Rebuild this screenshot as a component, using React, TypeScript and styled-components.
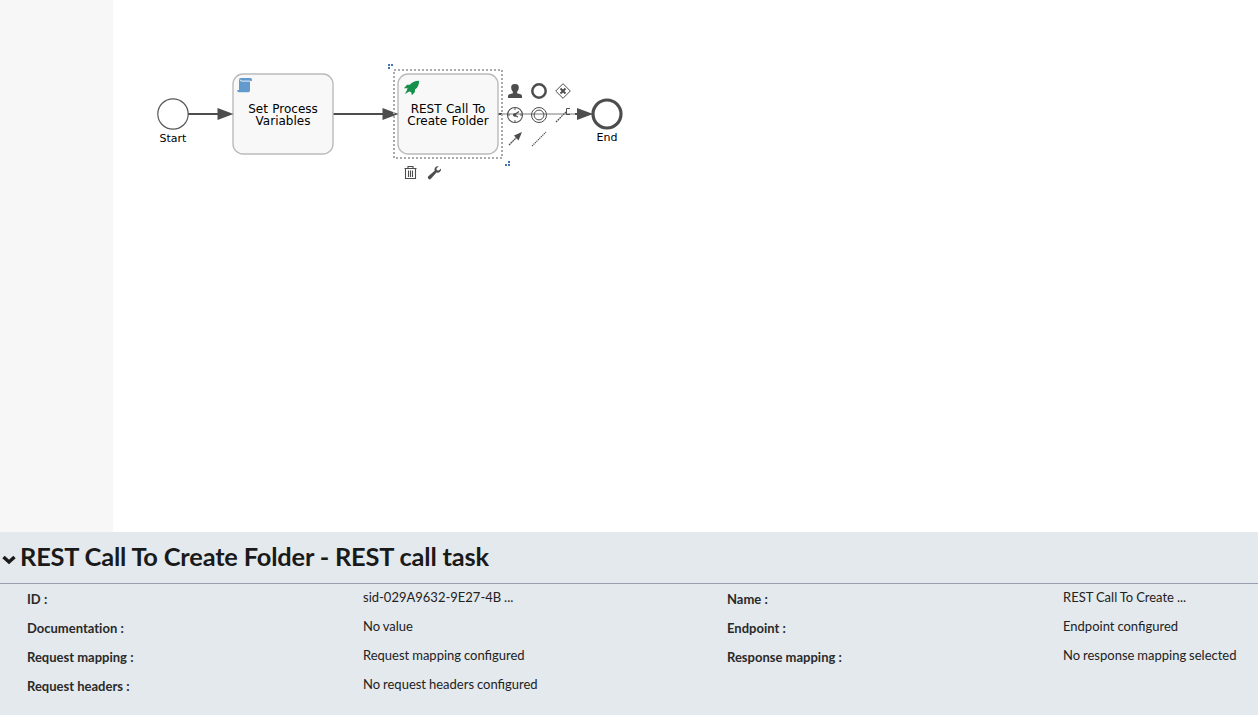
import React from "react";
import styled, { createGlobalStyle } from "styled-components";

const GlobalStyle = createGlobalStyle`
  * { box-sizing: border-box; }
  body { margin: 0; background: #fff; }
`;

const Page = styled.main`
  display: flex;
  flex-direction: column;
  width: 100%;
  height: 715px;
  overflow: hidden;
`;

const Editor = styled.section`
  display: flex;
  height: 532px;
`;

const Gutter = styled.aside`
  width: 113px;
  background: #f7f7f7;
`;

const Canvas = styled.div`
  position: relative;
  flex: 1;
  background: #fff;
`;

const Drawing = styled.svg`
  position: absolute;
  left: -113px;
  top: 0;
  pointer-events: none;
`;

const NodeLabel = styled.div<{ $x: number; $y: number; $size: number }>`
  position: absolute;
  left: ${(p) => p.$x - 163}px;
  top: ${(p) => p.$y}px;
  width: 100px;
  text-align: center;
  white-space: pre-line;
  font: ${(p) => p.$size}px/12px Verdana, "DejaVu Sans", sans-serif;
  word-spacing: 0.6px;
  color: #000;
`;

const Panel = styled.section`
  height: 183px;
  background: #e4e9ed;
  font-family: Lato, sans-serif;
  color: #1a1a1a;
`;

const PanelHeader = styled.header`
  display: flex;
  align-items: center;
  height: 52px;
  padding: 0 0 3px 2px;
  border-bottom: 1px solid #989eb0;
`;

const Chevron = styled.svg`
  width: 14px;
  height: 10px;
  margin: 7px 4px 0 0;
`;

const Title = styled.h1`
  margin: 0;
  font-size: 25.4px;
  letter-spacing: -0.18px;
  line-height: 35px;
  font-weight: 700;
  white-space: nowrap;
`;

const Properties = styled.div`
  display: grid;
  grid-template-columns: 700px 1fr;
  padding-left: 27px;
`;

const Property = styled.div`
  display: grid;
  grid-template-columns: 336px 1fr;
  height: 29px;
  font-size: 13px;
  line-height: 20px;
  white-space: nowrap;
`;

const PropertyName = styled.span`
  padding-top: 5px;
  font-weight: 700;
  font-variant-ligatures: none;
  color: #2a2a2a;
`;

const PropertyValue = styled.span`
  padding-top: 3px;
  word-spacing: -0.4px;
  color: #222;
`;

const properties: [string, string][] = [
  ["ID", "sid-029A9632-9E27-4B ..."],
  ["Name", "REST Call To Create ..."],
  ["Documentation", "No value"],
  ["Endpoint", "Endpoint configured"],
  ["Request mapping", "Request mapping configured"],
  ["Response mapping", "No response mapping selected"],
  ["Request headers", "No request headers configured"],
];

const INK = "#4d4d4d";

function Arrowhead({ x }: { x: number }) {
  return <path d={`M${x} 114 L${x - 16} 108 V120 Z`} fill={INK} />;
}

function Diagram() {
  return (
    <Drawing width="1258" height="532" viewBox="0 0 1258 532" fill="none">
      <circle cx="173" cy="114" r="15.2" stroke="#585858" strokeWidth="1.2" fill="#fff" />
      <path d="M188 114H220M333 114H385" stroke={INK} strokeWidth="2" />
      <path d="M498 114H592" stroke="#bcbcbc" strokeWidth="2" />
      <path d="M498 114H502M575 114H582" stroke={INK} strokeWidth="2" />
      <rect x="233" y="74" width="100" height="80" rx="10" fill="#f8f8f8" stroke="#bbb" strokeWidth="1.4" />
      <rect x="398" y="74" width="100" height="80" rx="10" fill="#f8f8f8" stroke="#bbb" strokeWidth="1.4" />
      <Arrowhead x={233.5} />
      <Arrowhead x={398.5} />
      <Arrowhead x={593} />
      <rect x="394" y="70" width="108" height="88" stroke="#aaa" strokeWidth="2" strokeDasharray="2 2" />
      <circle cx="607" cy="114" r="14" stroke={INK} strokeWidth="3.2" fill="#fff" />

      {/* script task marker */}
      <path d="M240.500 78H251Q252.200 78.500 252 81H250V90.500Q250 92.300 248.500 92.300H238.500Q237 92 237.300 90H239V79.500Q239 78 240.500 78Z" fill="#639ace" />
      <path d="M240 79.500Q240.200 81.100 241.800 81.100H250.300" stroke="#f9f9f9" strokeWidth=".9" />

      {/* rocket marker */}
      <path d="M419.200 80.800C414.500 80.900 411.500 82.500 409.800 84.800H407L404 88.300L407.600 88.200L406.800 90.600L404.800 94L409.300 91.600L411.200 92.200L411.800 95.200L414.800 92.200L415 89.600C417.800 87.600 419 85 419.200 80.800Z" fill="#16904a" />

      {/* resize grips */}
      <g fill="#4473b5">
        <path d="M388 64h2v2h-2zM391 64h2v2h-2zM388 67h2v2h-2zM505 164h2v2h-2zM508 164h2v2h-2zM508 161h2v2h-2z" />
      </g>

      {/* user task */}
      <path d="M515 84C512 84 511 85.600 511.200 88C511.400 90.200 512.500 91.200 512.900 92V93.300L509.300 94.300Q508 94.800 508 96V98H522V96Q522 94.800 520.700 94.300L517.100 93.300V92C517.500 91.200 518.600 90.200 518.800 88C519 85.600 518 84 515 84Z" fill={INK} />
      {/* end event */}
      <circle cx="539" cy="91" r="6.700" stroke={INK} strokeWidth="2.500" fill="#fff" />
      {/* gateway */}
      <path d="M563 83.700L570.300 91L563 98.300L555.700 91Z" stroke={INK} />
      <path d="M560.500 88.500L565.500 93.500M565.500 88.500L560.500 93.500" stroke={INK} strokeWidth="1.900" />
      {/* timer event */}
      <circle cx="515" cy="115" r="7.500" stroke={INK} strokeWidth="1.100" />
      <path d="M515 108V110M515 120V122M508 115H510M520 115H522" stroke={INK} strokeWidth=".9" />
      <path d="M519 111.500L514 115L518 117" stroke={INK} strokeWidth="1.200" />
      <circle cx="514.700" cy="115" r="1.700" fill={INK} />
      {/* intermediate event */}
      <circle cx="539" cy="115" r="7.500" stroke={INK} />
      <circle cx="539" cy="115" r="4.900" stroke={INK} />
      {/* annotation */}
      <path d="M556 122L566 112" stroke={INK} strokeWidth="1.200" strokeDasharray="1.800 .7" />
      <path d="M570 108.500H566.500V114.500H570" stroke={INK} />
      {/* sequence connector */}
      <path d="M509 145L518 136" stroke={INK} strokeWidth="1.300" strokeDasharray="2 .4" />
      <path d="M522 132L514 135.500L518.500 140.500Z" fill={INK} />
      {/* association connector */}
      <path d="M532 146L546 132" stroke={INK} strokeWidth="1.150" strokeDasharray="1.300 .8" />

      {/* delete */}
      <path d="M404.500 168.500H416.500M408 168V166.500H413V168M405.500 169V178.500H415.500V169M408.500 170.500V177M410.500 170.500V177M412.500 170.500V177" stroke={INK} strokeWidth="1.100" />
      {/* change type */}
      <path d="M438.800 166.200C436 165.800 434 168 434.700 170.800L428.300 176.300Q427.200 177.600 428.400 178.800Q429.600 180 430.900 178.800L436.500 172.600C439.200 173.200 441.400 171.200 441 168.400L438.800 170.600L436.800 170.200L436.500 168.300Z" fill={INK} />
    </Drawing>
  );
}

export default function App() {
  return (
    <Page>
      <GlobalStyle />
      <Editor>
        <Gutter />
        <Canvas>
          <Diagram />
          <NodeLabel $x={173} $y={133} $size={11}>Start</NodeLabel>
          <NodeLabel $x={283} $y={103} $size={12}>{"Set Process\nVariables"}</NodeLabel>
          <NodeLabel $x={448} $y={103} $size={12}>{"REST Call To\nCreate Folder"}</NodeLabel>
          <NodeLabel $x={607} $y={132} $size={11}>End</NodeLabel>
        </Canvas>
      </Editor>
      <Panel>
        <PanelHeader>
          <Chevron viewBox="0 0 14 10" fill="none">
            <path d="M1.500 2L7 7L12.500 2" stroke="#1a1a1a" strokeWidth="3.500" />
          </Chevron>
          <Title>REST Call To Create Folder - REST call task</Title>
        </PanelHeader>
        <Properties>
          {properties.map(([name, value]) => (
            <Property key={name}>
              <PropertyName>{name} :</PropertyName>
              <PropertyValue>{value}</PropertyValue>
            </Property>
          ))}
        </Properties>
      </Panel>
    </Page>
  );
}
